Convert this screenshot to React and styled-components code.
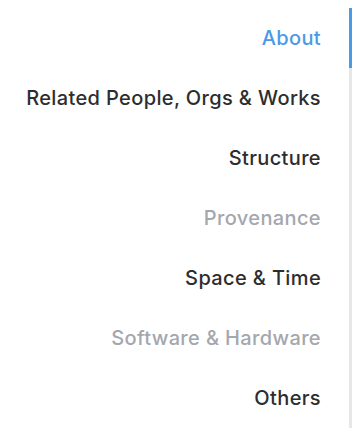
import React from "react";
import styled, { createGlobalStyle } from "styled-components";

const Global = createGlobalStyle`
  body {
    margin: 8px;
    background: #ffffff;
    font-family: Inter, "Noto Sans", sans-serif;
  }
`;

const Nav = styled.nav`
  display: flex;
  flex-direction: column;
  border-right: 3px solid #e5e7eb;
`;

const Item = styled.a`
  display: flex;
  align-items: center;
  justify-content: flex-end;
  height: 60px;
  padding-right: 28px;
  margin-right: -3px;
  border-right: 3px solid ${(p) => (p.$active ? "#4a9ae9" : "transparent")};
  font-size: 20px;
  font-weight: 500;
  letter-spacing: 0.37px;
  text-decoration: none;
  white-space: nowrap;
  color: ${(p) =>
    p.$active ? "#4a9ae9" : p.$disabled ? "#a4a7ae" : "#2d2d2f"};
  cursor: ${(p) => (p.$disabled ? "default" : "pointer")};
`;

const items = [
  { label: "About", active: true },
  { label: "Related People, Orgs & Works" },
  { label: "Structure" },
  { label: "Provenance", disabled: true },
  { label: "Space & Time" },
  { label: "Software & Hardware", disabled: true },
  { label: "Others" },
];

export default function App() {
  return (
    <>
      <Global />
      <Nav>
        {items.map((it) => (
          <Item key={it.label} $active={it.active} $disabled={it.disabled}>
            {it.label}
          </Item>
        ))}
      </Nav>
    </>
  );
}
